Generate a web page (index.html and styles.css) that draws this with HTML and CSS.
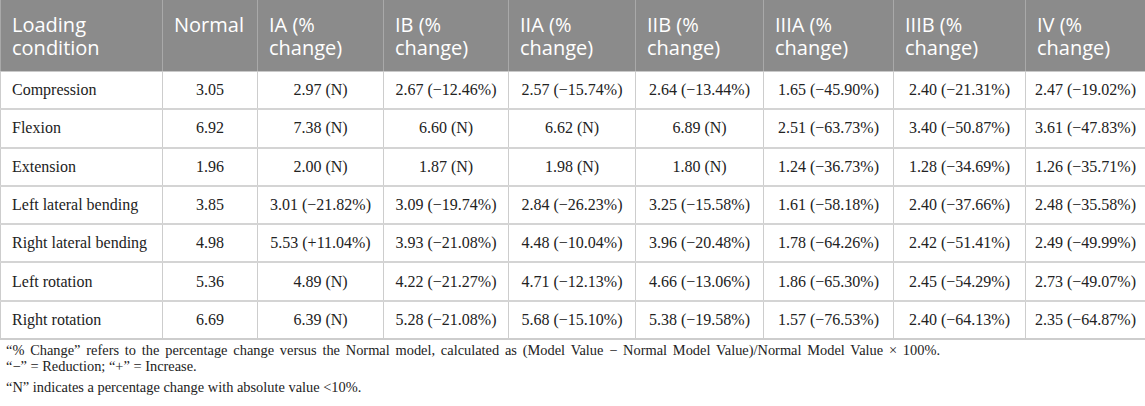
FILE: index.html
```html
<!DOCTYPE html>
<html>
<head>
<meta charset="utf-8">
<link rel="stylesheet" href="styles.css">
</head>
<body>
<div class="wrap">
<table class="data">
<colgroup>
<col class="c0"><col class="c1"><col class="c2"><col class="c3"><col class="c4"><col class="c5"><col class="c6"><col class="c7"><col class="c8">
</colgroup>
<thead>
<tr>
<th>Loading condition</th>
<th>Normal</th>
<th>IA (% change)</th>
<th>IB (% change)</th>
<th>IIA (% change)</th>
<th>IIB (% change)</th>
<th>IIIA (% change)</th>
<th>IIIB (% change)</th>
<th>IV (% change)</th>
</tr>
</thead>
<tbody>
<tr><td>Compression</td><td>3.05</td><td>2.97 (N)</td><td>2.67 (−12.46%)</td><td>2.57 (−15.74%)</td><td>2.64 (−13.44%)</td><td>1.65 (−45.90%)</td><td>2.40 (−21.31%)</td><td>2.47 (−19.02%)</td></tr>
<tr><td>Flexion</td><td>6.92</td><td>7.38 (N)</td><td>6.60 (N)</td><td>6.62 (N)</td><td>6.89 (N)</td><td>2.51 (−63.73%)</td><td>3.40 (−50.87%)</td><td>3.61 (−47.83%)</td></tr>
<tr><td>Extension</td><td>1.96</td><td>2.00 (N)</td><td>1.87 (N)</td><td>1.98 (N)</td><td>1.80 (N)</td><td>1.24 (−36.73%)</td><td>1.28 (−34.69%)</td><td>1.26 (−35.71%)</td></tr>
<tr><td>Left lateral bending</td><td>3.85</td><td>3.01 (−21.82%)</td><td>3.09 (−19.74%)</td><td>2.84 (−26.23%)</td><td>3.25 (−15.58%)</td><td>1.61 (−58.18%)</td><td>2.40 (−37.66%)</td><td>2.48 (−35.58%)</td></tr>
<tr><td>Right lateral bending</td><td>4.98</td><td>5.53 (+11.04%)</td><td>3.93 (−21.08%)</td><td>4.48 (−10.04%)</td><td>3.96 (−20.48%)</td><td>1.78 (−64.26%)</td><td>2.42 (−51.41%)</td><td>2.49 (−49.99%)</td></tr>
<tr><td>Left rotation</td><td>5.36</td><td>4.89 (N)</td><td>4.22 (−21.27%)</td><td>4.71 (−12.13%)</td><td>4.66 (−13.06%)</td><td>1.86 (−65.30%)</td><td>2.45 (−54.29%)</td><td>2.73 (−49.07%)</td></tr>
<tr><td>Right rotation</td><td>6.69</td><td>6.39 (N)</td><td>5.28 (−21.08%)</td><td>5.68 (−15.10%)</td><td>5.38 (−19.58%)</td><td>1.57 (−76.53%)</td><td>2.40 (−64.13%)</td><td>2.35 (−64.87%)</td></tr>
</tbody>
</table>
<div class="notes">
<p><span class="line-just">“% Change” refers to the percentage change versus the Normal model, calculated as (Model Value − Normal Model Value)/Normal Model Value × 100%.</span><span class="line">“−” = Reduction; “+” = Increase.</span></p>
<p>“N” indicates a percentage change with absolute value &lt;10%.</p>
</div>
</div>
</body>
</html>
```
FILE: styles.css
```css
html, body {
  margin: 0;
  padding: 0;
  background: #ffffff;
}
.wrap {
  width: 1145px;
}
.data {
  border-collapse: collapse;
  table-layout: fixed;
  width: 1145px;
}
.c0 { width: 162px; }
.c1 { width: 95px; }
.c2 { width: 126px; }
.c3 { width: 125px; }
.c4 { width: 127px; }
.c5 { width: 128px; }
.c6 { width: 130px; }
.c7 { width: 132px; }
.c8 { width: 120px; }
.data th {
  background: #8b8b8b;
  color: #ffffff;
  font-family: "Open Sans", "Noto Sans", sans-serif;
  font-weight: 400;
  font-size: 20px;
  line-height: 23px;
  text-align: left;
  vertical-align: top;
  padding: 13px 6px 0 11px;
  height: 58px;
  border-left: 1px solid #a9a9a9;
  border-right: 1px solid #a9a9a9;
  border-bottom: 1px solid #c9c9c9;
}
.data td {
  font-family: "Liberation Serif", "Times New Roman", serif;
  font-size: 16px;
  color: #222222;
  text-align: center;
  vertical-align: middle;
  height: 36.3px;
  padding: 0 4px;
  border: 1px solid #cdcdcd;
  border-top: 2px solid #d4d4d4;
  white-space: nowrap;
}
.data tbody tr:first-child td {
  border-top: 1px solid #cdcdcd;
}
.data td:first-child {
  text-align: left;
  padding-left: 11px;
}
.data tbody tr:last-child td {
  border-bottom: 2px solid #cdcdcd;
}
.notes {
  font-family: "Liberation Serif", "Times New Roman", serif;
  font-size: 14.4px;
  color: #222222;
  padding: 2px 0 0 6px;
}
.notes p {
  margin: 0 0 5px 0;
  line-height: 16px;
}
.notes .line-just {
  display: block;
  width: 934px;
  text-align: justify;
  text-align-last: justify;
}
.notes .line {
  display: block;
}
```
